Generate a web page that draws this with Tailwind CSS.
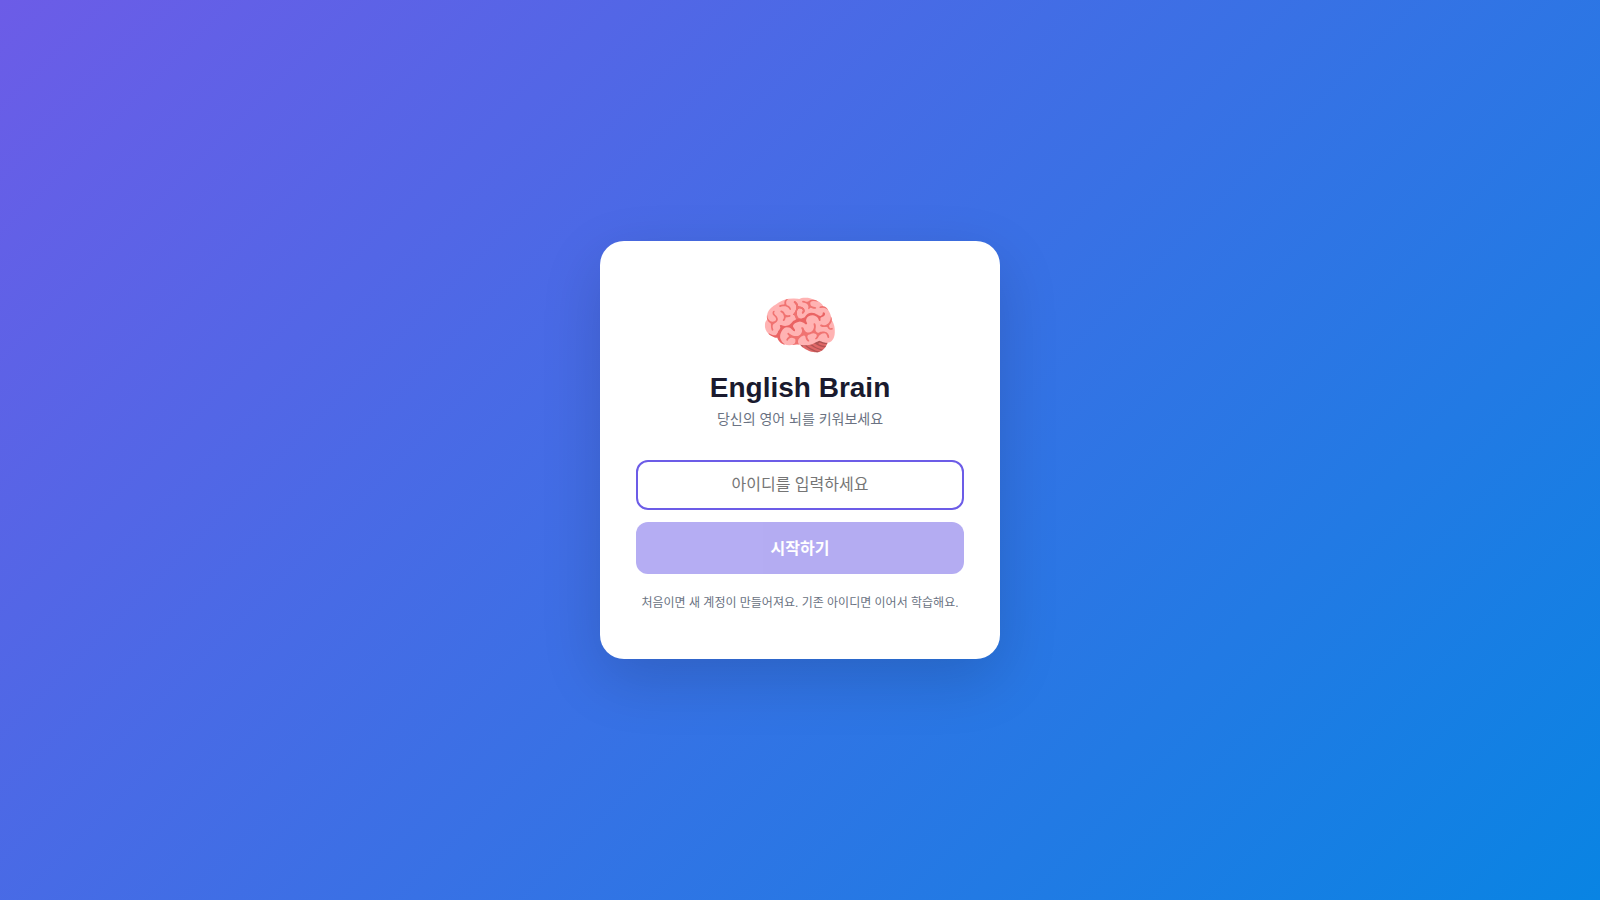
<!doctype html>
<html lang="ko">
  <head>
    <meta charset="UTF-8" />
    <meta name="viewport" content="width=device-width, initial-scale=1.0" />
    <title>English Brain</title>
    <script src="https://cdn.jsdelivr.net/npm/@tailwindcss/browser@4"></script>
  </head>
  <body class="font-['Liberation_Sans','Noto_Sans_CJK_KR',sans-serif]">
    <main class="min-h-dvh flex items-center justify-center p-5 bg-[linear-gradient(135deg,#6c5ce7_0%,#0984e3_100%)]">
      <form class="w-full max-w-[400px] bg-white rounded-3xl px-9 py-12 text-center shadow-[0_20px_60px_rgba(0,0,0,0.15)]">
        <div class="text-[64px] leading-[74px] mb-2">🧠</div>
        <h1 class="text-[28px] leading-[34px] font-extrabold text-[#1a1a2e] mb-1">English Brain</h1>
        <p class="text-sm leading-5 text-gray-500 mb-[31px]">당신의 영어 뇌를 키워보세요</p>
        <input type="text" aria-label="아이디" placeholder="아이디를 입력하세요" class="block w-full h-[50px] px-4 mb-3 text-base text-center border-2 border-[#6c5ce7] rounded-xl outline-none placeholder:text-[#757575]" />
        <button type="submit" disabled class="block w-full h-[52px] pt-0.5 text-base font-bold text-white bg-[#6c5ce7] rounded-xl opacity-50">시작하기</button>
        <p class="text-xs leading-[15px] text-gray-500 mt-[22px]">처음이면 새 계정이 만들어져요. 기존 아이디면 이어서 학습해요.</p>
      </form>
    </main>
  </body>
</html>
